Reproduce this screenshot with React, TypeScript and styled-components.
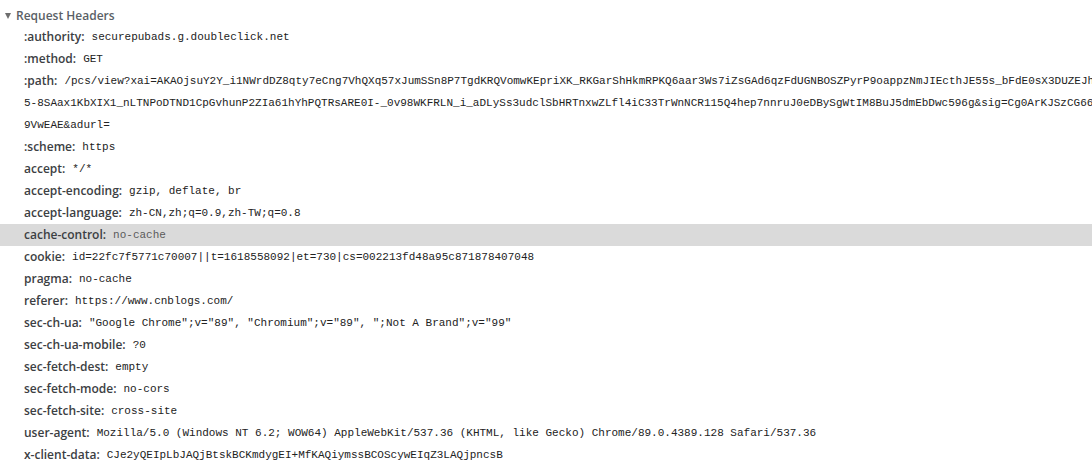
import React from 'react'
import styled, { createGlobalStyle } from 'styled-components'

const GlobalStyle = createGlobalStyle`
  html, body {
    margin: 0;
    padding: 0;
    background: #fff;
    overflow: hidden;
  }
`

// panel is a bit wider than the window, so long values run past the edge
const Panel = styled.div`
  width: 1110px;
  padding-top: 4px;
  font-family: 'Open Sans', 'Liberation Sans', sans-serif;
  font-size: 12px;
  color: #303942;
`

const SectionTitle = styled.div`
  display: flex;
  align-items: center;
  gap: 5px;
  height: 22px;
  padding-left: 5px;
  font-weight: 600;
  color: #5a5f66;
`

const Triangle = styled.span`
  width: 0;
  height: 0;
  border-left: 3.5px solid transparent;
  border-right: 3.5px solid transparent;
  border-top: 6px solid #6e6e6e;
  margin-top: 1px;
`

const HeaderList = styled.div`
  display: flex;
  flex-direction: column;
`

const HeaderRow = styled.div<{ $selected?: boolean }>`
  padding-left: 24px;
  line-height: 22px;
  word-break: break-all;
  background: ${(p) => (p.$selected ? '#dadada' : 'transparent')};
`

const HeaderName = styled.span`
  font-weight: 600;
  color: #3c4043;
  margin-right: 7px;
  vertical-align: top;
`

const HeaderValue = styled.span<{ $selected?: boolean }>`
  font-family: 'Liberation Mono', 'DejaVu Sans Mono', monospace;
  font-size: 11px;
  line-height: 22px;
  vertical-align: top;
  color: ${(p) => (p.$selected ? '#5a5a5a' : '#222')};
`

const PATH =
  '/pcs/view?xai=AKAOjsuY2Y_i1NWrdDZ8qty7eCng7VhQXq57xJumSSn8P7TgdKRQVomwKEpriXK_RKGarShHkmRPKQ6aar3Ws7iZsGAd6qzFdUGNBOSZPyrP9oappzNmJIEcthJE55s_bFdE0sX3DUZEJhQw' +
  '5-8SAax1KbXIX1_nLTNPoDTND1CpGvhunP2ZIa61hYhPQTRsARE0I-_0v98WKFRLN_i_aDLySs3udclSbHRTnxwZLfl4iC33TrWnNCR115Q4hep7nnruJ0eDBySgWtIM8BuJ5dmEbDwc596g&sig=Cg0ArKJSzCG66Zw' +
  '9VwEAE&adurl='

const headers: [string, string][] = [
  [':authority', 'securepubads.g.doubleclick.net'],
  [':method', 'GET'],
  [':path', PATH],
  [':scheme', 'https'],
  ['accept', '*/*'],
  ['accept-encoding', 'gzip, deflate, br'],
  ['accept-language', 'zh-CN,zh;q=0.9,zh-TW;q=0.8'],
  ['cache-control', 'no-cache'],
  ['cookie', 'id=22fc7f5771c70007||t=1618558092|et=730|cs=002213fd48a95c871878407048'],
  ['pragma', 'no-cache'],
  ['referer', 'https://www.cnblogs.com/'],
  ['sec-ch-ua', '"Google Chrome";v="89", "Chromium";v="89", ";Not A Brand";v="99"'],
  ['sec-ch-ua-mobile', '?0'],
  ['sec-fetch-dest', 'empty'],
  ['sec-fetch-mode', 'no-cors'],
  ['sec-fetch-site', 'cross-site'],
  [
    'user-agent',
    'Mozilla/5.0 (Windows NT 6.2; WOW64) AppleWebKit/537.36 (KHTML, like Gecko) Chrome/89.0.4389.128 Safari/537.36'
  ],
  ['x-client-data', 'CJe2yQEIpLbJAQjBtskBCKmdygEI+MfKAQiymssBCOScywEIqZ3LAQjpncsB']
]

const App: React.FC = () => {
  const selected = 'cache-control'
  return (
    <>
      <GlobalStyle />
      <Panel>
        <SectionTitle>
          <Triangle />
          Request Headers
        </SectionTitle>
        <HeaderList>
          {headers.map(([name, value]) => (
            <HeaderRow key={name} $selected={name === selected}>
              <HeaderName>{name}:</HeaderName>
              <HeaderValue $selected={name === selected}>{value}</HeaderValue>
            </HeaderRow>
          ))}
        </HeaderList>
      </Panel>
    </>
  )
}

export default App
